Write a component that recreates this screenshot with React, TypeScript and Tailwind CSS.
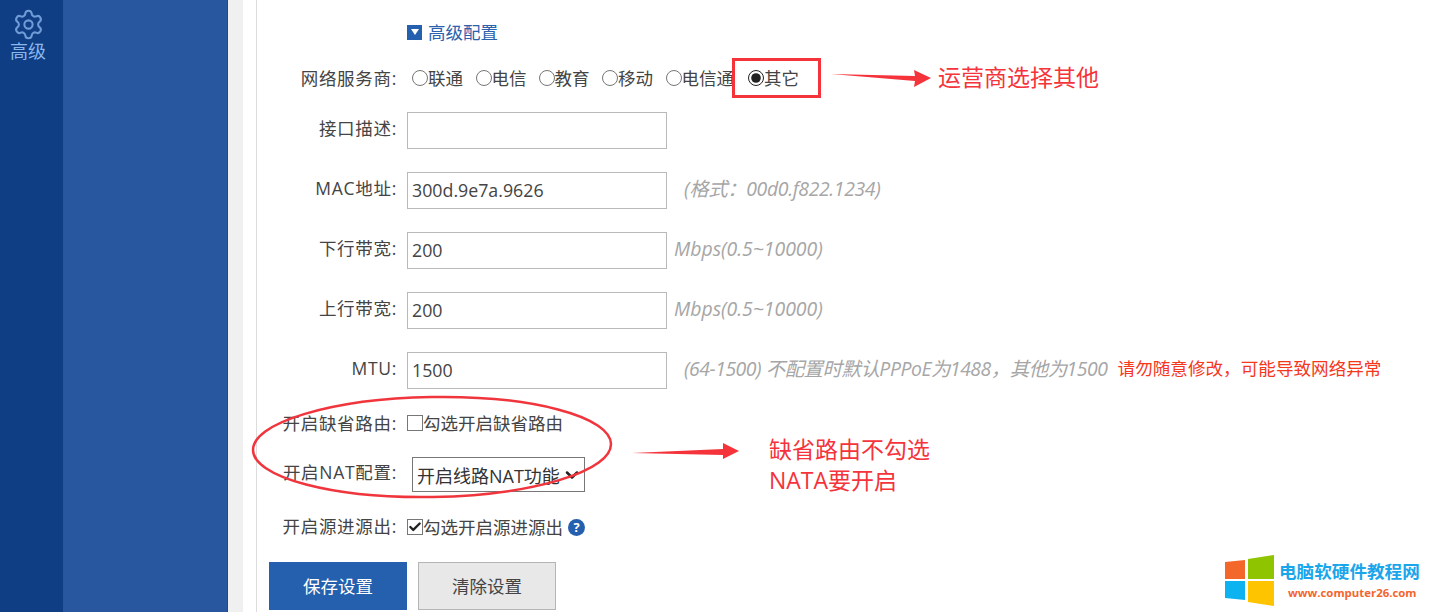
import { Check, ChevronDown, Settings } from 'lucide-react';
import type { ReactNode } from 'react';

const font = { fontFamily: '"Open Sans", "Noto Sans CJK SC", sans-serif' };

const carriers = [
  { name: '联通', cls: 'mr-[12.5px]' },
  { name: '电信', cls: 'mr-[12px]' },
  { name: '教育', cls: 'mr-[12.5px]' },
  { name: '移动', cls: 'mr-[12.5px]' },
  { name: '电信通', cls: 'mr-[14px]' },
  { name: '其它', cls: '', checked: true },
];

function Row({ label, className, labelCls = '', children }: { label: string; className: string; labelCls?: string; children: ReactNode }) {
  return (
    <div className={`flex items-center ${className}`}>
      <div className={`w-[140px] shrink-0 text-right whitespace-nowrap tracking-[0.7px] ${labelCls}`}>{label}</div>
      <div className="ml-[10px] flex items-center whitespace-nowrap">{children}</div>
    </div>
  );
}

function TextInput({ value }: { value?: string }) {
  return (
    <input
      readOnly
      value={value ?? ''}
      className="w-[260px] h-[37px] border border-[#b9b9b9] bg-white px-[4px] pb-[2px] text-[17.8px] text-[#444] outline-none"
    />
  );
}

function Tick({ on }: { on?: boolean }) {
  return (
    <span className="w-[16px] h-[16px] border border-[#777] bg-white flex items-center justify-center shrink-0">
      {on && <Check size={16} strokeWidth={4} className="text-[#222]" />}
    </span>
  );
}

function Hint({ className, children }: { className: string; children: ReactNode }) {
  return <span className={`italic text-[19.4px] text-[#a6a6a6] -translate-y-[2px] ${className}`}>{children}</span>;
}

function Annotations() {
  return (
    <>
      <div className="absolute left-[732px] top-[58px] w-[89px] h-[40px] border-[3px] border-[#f5333b]" />
      <svg className="absolute left-0 top-0 pointer-events-none" width="1429" height="612">
        <polygon points="831,74 915,76 914,70 931,78 914,87 915,81" fill="#f5333b" />
        <polygon points="632,453 723,449 723,443 739,451 723,459 723,455" fill="#f5333b" />
        <ellipse cx="432" cy="447" rx="179" ry="50" transform="rotate(-1 432 447)" fill="none" stroke="#f0353d" strokeWidth="2.5" />
        {/* watermark logo */}
        <polygon points="1225,562 1245,560 1245,579 1225,579" fill="#f4672b" />
        <polygon points="1248,559 1274,555 1274,579 1248,579" fill="#8fc400" />
        <polygon points="1225,581 1245,581 1245,600 1225,598" fill="#0db2f0" />
        <polygon points="1248,581 1274,581 1274,606 1248,602" fill="#ffc400" />
      </svg>
      <div className="absolute left-[938px] top-[61px] text-[23px] leading-[32px] text-[#f5333b] whitespace-nowrap">运营商选择其他</div>
      <div className="absolute left-[769px] top-[434px] text-[23px] leading-[31px] text-[#f5333b] whitespace-nowrap">
        <div>缺省路由不勾选</div>
        <div>NATA要开启</div>
      </div>
      <div className="absolute left-[1279px] top-[560px] text-[17.6px] leading-[22px] font-bold text-[#1ba5ea] whitespace-nowrap">电脑软硬件教程网</div>
      <div className="absolute left-[1288px] top-[585px] text-[11.4px] leading-[16px] font-bold text-[#f4652e] whitespace-nowrap">www.computer26.com</div>
    </>
  );
}

export default function App() {
  return (
    <div className="relative flex w-[1429px] h-[612px] overflow-hidden bg-white text-[17.5px] text-[#444]" style={font}>
      {/* sidebar */}
      <div className="w-[63px] shrink-0 bg-[#0f3e84] flex flex-col items-center pt-[8px] pr-[7px]">
        <Settings size={33} strokeWidth={1.5} className="text-[#6f9cd6]" />
        <div className="text-[18px] leading-[24px] text-[#8ab8ee] -mt-[2px]">高级</div>
      </div>
      <div className="w-[164px] shrink-0 bg-[#28569f] border-r border-[#33475f] box-content" />
      <div className="w-[15px] shrink-0 bg-[#f0f0f0]" />
      <div className="w-[13px] shrink-0 bg-white border-r border-[#dcdcdc] box-content" />

      {/* form */}
      <div className="flex-1 min-w-0">
        <div className="flex items-center ml-[150px] mt-[22px] h-[20px]">
          <span className="w-[15px] h-[15px] bg-[#2560ae] flex items-center justify-center">
            <span className="w-0 h-0 border-x-[4px] border-x-transparent border-t-[6px] border-t-white" />
          </span>
          <span className="ml-[6px] text-[#2a62ad]">高级配置</span>
        </div>

        <Row label="网络服务商:" className="h-[36px] mt-[18px]">
          <span className="w-[5px]" />
          {carriers.map((c) => (
            <label key={c.name} className={`flex items-center ${c.cls}`}>
              <input type="radio" name="isp" readOnly checked={!!c.checked} className="w-[16px] h-[16px] m-0 accent-[#222]" />
              <span>{c.name}</span>
            </label>
          ))}
        </Row>

        <Row label="接口描述:" labelCls="pb-[4px]" className="h-[37px] mt-[16px]">
          <TextInput />
        </Row>
        <Row label="MAC地址:" labelCls="pb-[4px]" className="h-[37px] mt-[23px]">
          <TextInput value="300d.9e7a.9626" />
          <Hint className="ml-[17px] tracking-[-0.35px]">(格式：00d0.f822.1234)</Hint>
        </Row>
        <Row label="下行带宽:" labelCls="pb-[4px]" className="h-[37px] mt-[23px]">
          <TextInput value="200" />
          <Hint className="ml-[7px]">Mbps(0.5~10000)</Hint>
        </Row>
        <Row label="上行带宽:" labelCls="pb-[4px]" className="h-[37px] mt-[23px]">
          <TextInput value="200" />
          <Hint className="ml-[7px]">Mbps(0.5~10000)</Hint>
        </Row>
        <Row label="MTU:" labelCls="pb-[4px]" className="h-[37px] mt-[23px]">
          <TextInput value="1500" />
          <Hint className="ml-[17px] tracking-[-0.45px]">(64-1500)&nbsp;不配置时默认PPPoE为1488，其他为1500</Hint>
          <span className="ml-[10px] text-[17.6px] text-[#f5371c] -translate-y-[2px]">请勿随意修改，可能导致网络异常</span>
        </Row>

        <Row label="开启缺省路由:" className="h-[36px] mt-[16px]">
          <Tick />
          <span>勾选开启缺省路由</span>
        </Row>
        <Row label="开启NAT配置:" labelCls="pb-[4px]" className="h-[35px] mt-[16px]">
          <span className="relative ml-[5px] flex">
            <select className="appearance-none w-[173px] h-[35px] border border-[#777] bg-white pl-[4px] pt-[3px] text-[18px] text-[#333] outline-none">
              <option>开启线路NAT功能</option>
            </select>
            <ChevronDown size={20} strokeWidth={3} className="absolute right-[3px] top-[8px] text-[#222] bg-white pointer-events-none" />
          </span>
        </Row>
        <Row label="开启源进源出:" labelCls="pb-[2px]" className="h-[36px] mt-[17px]">
          <Tick on />
          <span>勾选开启源进源出</span>
          <span className="ml-[5px] w-[17px] h-[17px] rounded-full bg-[#2560ae] text-white text-[13px] leading-[17px] font-bold text-center">?</span>
        </Row>

        <div className="flex ml-[12px] mt-[17px]">
          <button className="w-[138px] h-[48px] bg-[#2460ae] text-white text-[17.5px]">保存设置</button>
          <button className="ml-[11px] w-[138px] h-[48px] bg-[#e8e8e8] border border-[#b5b5b5] text-[17.5px] text-[#444]">清除设置</button>
        </div>
      </div>

      <Annotations />
    </div>
  );
}
